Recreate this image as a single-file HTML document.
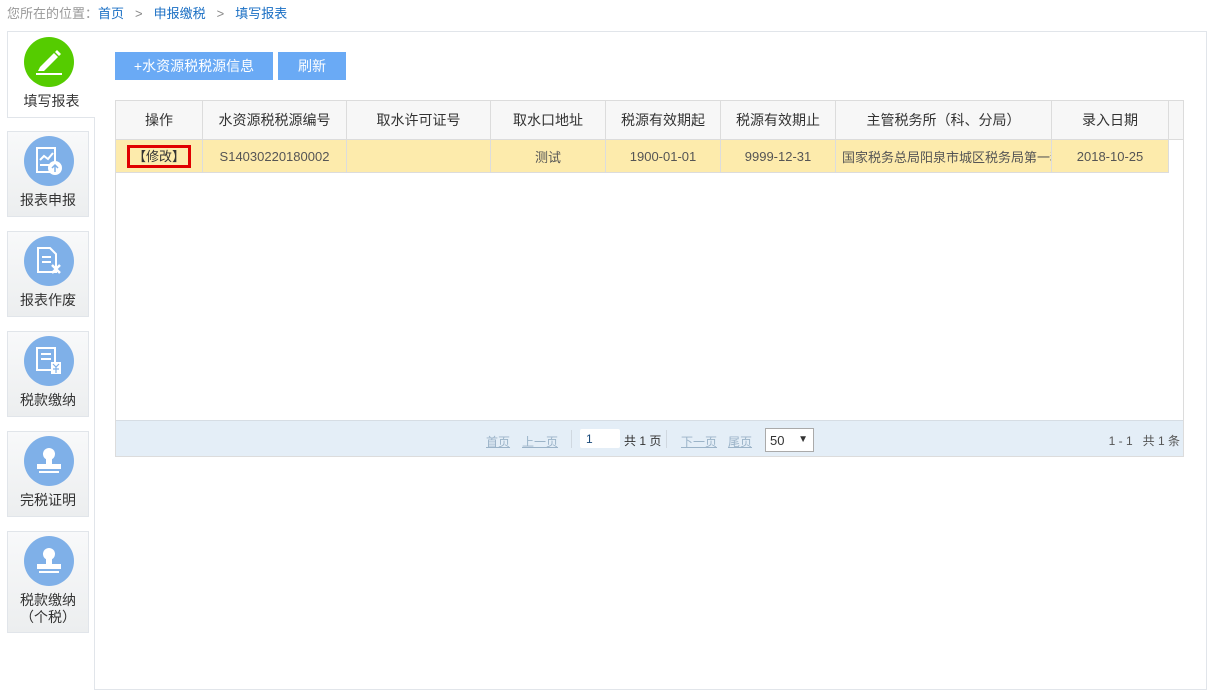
<!DOCTYPE html>
<html><head><meta charset="utf-8"><style>
*{margin:0;padding:0;box-sizing:border-box}
body{width:1213px;height:696px;background:#fff;font-family:"Liberation Sans","Noto Sans CJK SC",sans-serif;font-size:13px;color:#333;position:relative;overflow:hidden}
.abs{position:absolute}
.crumb{left:7px;top:3px;font-size:13px;color:#999}
.crumb a{color:#1a6fc4;text-decoration:none}
.crumb span.g{color:#888;margin:0 11px}
.main{left:94px;top:31px;width:1113px;height:659px;border:1px solid #e1e5ea}
.side{left:7px;width:82px;height:86px;border:1px solid #e1e5ea;background:linear-gradient(#f8f9fa,#eceeef);text-align:center}
.side .c{position:absolute;left:16px;top:4px;width:50px;height:50px;border-radius:50%;background:#7fb0e8}
.side .t{position:absolute;left:0;right:0;top:60px;font-size:14px;color:#333;line-height:17px}
.btn{top:52px;height:28px;background:#6aaaf5;color:#fff;font-size:14px;line-height:28px;text-align:center}
table{border-collapse:collapse;table-layout:fixed}
td,th{border:1px solid #dcdcdc;text-align:center;white-space:nowrap;overflow:hidden;font-weight:normal}
th{height:39px;background:#f7f7f7;font-size:14px;color:#333}
td{height:33px;background:#fdebac;font-size:13px;color:#555}
</style></head><body>
<div class="abs crumb">您所在的位置：<a>首页</a><span class="g">&gt;</span><a>申报缴税</a><span class="g">&gt;</span><a>填写报表</a></div>
<div class="abs main"></div>
<div class="abs side" style="top:31px;width:88px;height:87px;background:#fff;border-right:none">
 <div class="c" style="background:#55cc00;left:16px;top:5px"><svg width="50" height="50" viewBox="0 0 50 50"><path d="M16 30 L30 16 L34 20 L20 34 L14 34 Z" fill="#fff"/><path d="M31 15 L33 13 L37 17 L35 19 Z" fill="#fff"/><rect x="12" y="36" width="26" height="2" fill="#fff"/></svg></div>
 <div class="t" style="top:61px">填写报表</div></div>
<div class="abs side" style="top:131px"><div class="c"><svg width="50" height="50" viewBox="0 0 50 50"><rect x="13" y="12" width="18" height="24" fill="none" stroke="#fff" stroke-width="2"/><path d="M16 24 l4-4 4 3 5-6" stroke="#fff" stroke-width="2" fill="none"/><line x1="16" y1="29" x2="25" y2="29" stroke="#fff" stroke-width="2"/><circle cx="31" cy="32" r="7" fill="#fff"/><path d="M31 36 v-7 m-3 3 l3-3 3 3" stroke="#7fb0e8" stroke-width="1.5" fill="none"/></svg></div><div class="t">报表申报</div></div>
<div class="abs side" style="top:231px"><div class="c"><svg width="50" height="50" viewBox="0 0 50 50"><path d="M14 12 h12 l6 6 v18 h-18 z" fill="none" stroke="#fff" stroke-width="2"/><line x1="18" y1="21" x2="27" y2="21" stroke="#fff" stroke-width="2"/><line x1="18" y1="26" x2="27" y2="26" stroke="#fff" stroke-width="2"/><path d="M28 29 l8 8 m0-8 l-8 8" stroke="#fff" stroke-width="2.5"/></svg></div><div class="t">报表作废</div></div>
<div class="abs side" style="top:331px"><div class="c"><svg width="50" height="50" viewBox="0 0 50 50"><rect x="13" y="12" width="18" height="22" fill="none" stroke="#fff" stroke-width="2"/><line x1="17" y1="18" x2="27" y2="18" stroke="#fff" stroke-width="2"/><line x1="17" y1="23" x2="27" y2="23" stroke="#fff" stroke-width="2"/><rect x="27" y="26" width="10" height="12" fill="#fff"/><path d="M29 28 l3 3 3-3 M32 31 v6 M29 33 h6" stroke="#7fb0e8" stroke-width="1.2" fill="none"/></svg></div><div class="t">税款缴纳</div></div>
<div class="abs side" style="top:431px"><div class="c"><svg width="50" height="50" viewBox="0 0 50 50"><circle cx="25" cy="18" r="6" fill="#fff"/><rect x="22" y="22" width="6" height="6" fill="#fff"/><rect x="13" y="28" width="24" height="5" fill="#fff"/><rect x="15" y="35" width="20" height="2" fill="#fff"/></svg></div><div class="t">完税证明</div></div>
<div class="abs side" style="top:531px;height:102px"><div class="c"><svg width="50" height="50" viewBox="0 0 50 50"><circle cx="25" cy="18" r="6" fill="#fff"/><rect x="22" y="22" width="6" height="6" fill="#fff"/><rect x="13" y="28" width="24" height="5" fill="#fff"/><rect x="15" y="35" width="20" height="2" fill="#fff"/></svg></div><div class="t">税款缴纳<br>（个税）</div></div>
<div class="abs btn" style="left:115px;width:158px">+水资源税税源信息</div>
<div class="abs btn" style="left:278px;width:68px">刷新</div>
<div class="abs" style="left:115px;top:100px;width:1069px;height:357px;border:1px solid #dcdcdc"></div>
<div class="abs" style="left:1167px;top:100px;width:17px;height:40px;background:#f7f7f7;border:1px solid #dcdcdc;border-left:none"></div>
<table class="abs" style="left:115px;top:100px;width:1053px">
<colgroup><col style="width:87px"><col style="width:144px"><col style="width:144px"><col style="width:115px"><col style="width:115px"><col style="width:115px"><col style="width:216px"><col style="width:117px"></colgroup>
<tr><th>操作</th><th>水资源税税源编号</th><th>取水许可证号</th><th>取水口地址</th><th>税源有效期起</th><th>税源有效期止</th><th>主管税务所（科、分局）</th><th>录入日期</th></tr>
<tr><td><span style="display:inline-block;border:3px solid #e00000;padding:0 3px;line-height:17px;color:#333">【修改】</span></td><td>S14030220180002</td><td></td><td>测试</td><td>1900-01-01</td><td>9999-12-31</td><td style="text-align:left;padding-left:6px">国家税务总局阳泉市城区税务局第一税务</td><td>2018-10-25</td></tr>
</table>
<div class="abs" style="left:116px;top:420px;width:1067px;height:36px;background:#e4eef7;border-top:1px solid #d6dde4;font-size:12px;color:#333">
 <span class="abs" style="left:370px;top:12px;color:#9bb3c8;text-decoration:underline">首页</span>
 <span class="abs" style="left:406px;top:12px;color:#9bb3c8;text-decoration:underline">上一页</span>
 <span class="abs" style="left:455px;top:9px;width:1px;height:18px;background:#d0d8e0"></span>
 <span class="abs" style="left:464px;top:8px;width:40px;height:19px;background:#fff;border-radius:2px;padding:3px 6px;color:#1a4a7a">1</span>
 <span class="abs" style="left:508px;top:11px">共 1 页</span>
 <span class="abs" style="left:550px;top:9px;width:1px;height:18px;background:#d0d8e0"></span>
 <span class="abs" style="left:565px;top:12px;color:#9bb3c8;text-decoration:underline">下一页</span>
 <span class="abs" style="left:612px;top:12px;color:#9bb3c8;text-decoration:underline">尾页</span>
 <span class="abs" style="left:649px;top:7px;width:49px;height:24px;background:#fff;border:1px solid #aaa;padding:4px 4px;font-size:13px">50<span style="position:absolute;right:5px;top:5px;font-size:10px">▼</span></span>
 <span class="abs" style="right:3px;top:11px;color:#555">1 - 1&nbsp;&nbsp;&nbsp;共 1 条</span>
</div>
</body></html>
